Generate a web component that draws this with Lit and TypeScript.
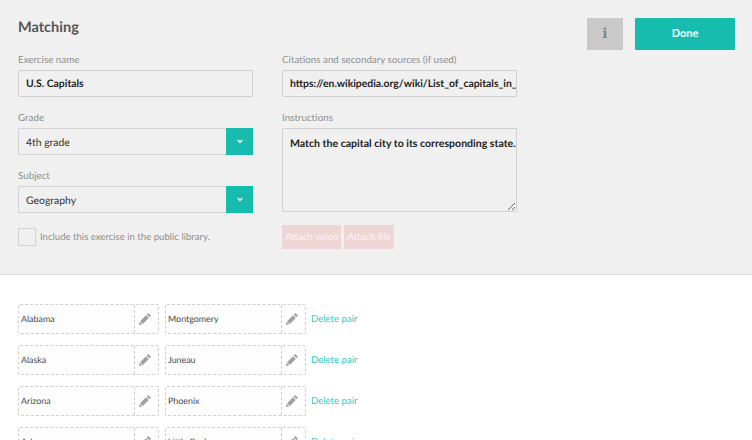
import { LitElement, html, css, svg } from "lit";
import { customElement } from "lit/decorators.js";

const pairs = [
  ["Alabama", "Montgomery"],
  ["Alaska", "Juneau"],
  ["Arizona", "Phoenix"],
  ["Arkansas", "Little Rock"],
];

const pencil = svg`<svg class="pencil" viewBox="0 0 14 14" width="12" height="12" aria-hidden="true">
  <path fill="currentColor" d="M10.2.6a.9.9 0 0 1 1.3 0l1.9 1.9a.9.9 0 0 1 0 1.3l-1.2 1.2-3.2-3.2zM8.2 2.6l3.2 3.2-6.9 6.9-3.2-3.2zM.8 10.2l3 3-3.5.7a.3.3 0 0 1-.3-.3z"/>
</svg>`;

const chevron = svg`<svg viewBox="0 0 8 6" width="6" height="5" aria-hidden="true">
  <path fill="none" stroke="#fff" stroke-width="2" d="M1 1l3 3 3-3"/>
</svg>`;

@customElement("app-root")
export class AppRoot extends LitElement {
  static styles = css`
    :host {
      display: block;
      width: 752px;
      height: 440px;
      overflow: hidden;
      background: #fff;
      font-family: "Lato", "Open Sans", sans-serif;
      color: #444;
      text-rendering: geometricPrecision;
    }
    * { box-sizing: border-box; }
    .panel {
      height: 275px;
      background: #f0f0f0;
      border-bottom: 1px solid #ddd;
      padding: 17px 17px 0 18px;
      display: flex;
      justify-content: space-between;
      align-items: flex-start;
    }
    h1 {
      margin: 0 0 16px;
      padding-top: 2px;
      font-size: 14.5px;
      line-height: 18px;
      font-weight: 700;
      color: #555;
    }
    .cols {
      display: grid;
      grid-template-columns: 235px 235px;
      column-gap: 29px;
    }
    .col { display: flex; flex-direction: column; }
    label, .label {
      display: block;
      font-size: 9.8px;
      line-height: 15px;
      color: #8f8f8f;
      margin-bottom: 2px;
      white-space: nowrap;
    }
    .field { margin-bottom: 14px; }
    .field.last { margin-bottom: 15px; }
    input, textarea {
      display: block;
      width: 235px;
      font: 700 10.4px/14px "Lato", sans-serif;
      text-rendering: geometricPrecision;
      color: #222;
      background: #f0f0f0;
      border: 1px solid #d0d0d0;
      border-radius: 1px;
      outline: none;
    }
    input { height: 27px; padding: 0 0 0 7px; }
    textarea {
      height: 84px;
      padding: 8px 0 8px 7px;
      font-size: 10.55px;
      resize: vertical;
      overflow: hidden;
      white-space: pre;
    }
    .select {
      height: 27px;
      display: flex;
      align-items: center;
      justify-content: space-between;
      border: 1px solid #d3d3d3;
      border-right: 0;
      border-radius: 2px;
      font-size: 10.4px;
      color: #333;
      padding-left: 7px;
    }
    .select-text { padding-top: 2px; }
    .arrow {
      width: 27px;
      height: 27px;
      margin-top: -1px;
      margin-bottom: -1px;
      background: #17bcae;
      display: flex;
      align-items: center;
      justify-content: center;
    }
    .check {
      display: flex;
      align-items: center;
      gap: 4px;
      font-size: 9.6px;
      color: #8f8f8f;
      white-space: nowrap;
    }
    .check-text { padding-top: 1px; }
    .box {
      width: 18px;
      height: 18px;
      flex: none;
      border: 1px solid #d3d3d3;
    }
    .attach { display: flex; gap: 3px; margin-top: -1px; }
    .attach span {
      height: 24px;
      line-height: 24px;
      padding: 0 3px;
      background: #eed5d6;
      color: #fbf4f4;
      font-size: 9.7px;
      white-space: nowrap;
      text-align: center;
    }
    .attach span:first-child { width: 59px; }
    .attach span:last-child { width: 50px; }
    .actions { display: flex; gap: 12px; margin-top: 1px; }
    .info {
      width: 36px;
      height: 32px;
      background: #c9c9c9;
      color: #858585;
      display: flex;
      align-items: center;
      justify-content: center;
      font: 700 14px "DejaVu Serif", serif;
    }
    .done {
      width: 100px;
      height: 32px;
      padding-bottom: 2px;
      border-radius: 1px;
      background: #17bcae;
      color: #fff;
      font-size: 11px;
      font-weight: 700;
      display: flex;
      align-items: center;
      justify-content: center;
    }
    .list {
      padding: 29px 18px 0;
      display: flex;
      flex-direction: column;
      gap: 11.5px;
    }
    .row { display: flex; align-items: center; }
    .cell {
      height: 29.5px;
      display: flex;
      flex: none;
      background: #fdfdfd;
      border: 1px dashed #cfcfcf;
      border-radius: 2px;
      font-size: 8.9px;
      color: #4a4a4a;
    }
    .cell.a { width: 141px; margin-right: 6px; }
    .cell.b { width: 141px; margin-right: 5px; }
    .name { flex: 1; padding-left: 2px; line-height: 28px; }
    .edit {
      width: 24px;
      padding-right: 3px;
      border-left: 1px dashed #cfcfcf;
      display: flex;
      align-items: center;
      justify-content: center;
      color: #a0a0a0;
    }
    .delete { font-size: 9.6px; color: #2ccbc0; padding-top: 1px; }
  `;

  render() {
    return html`
      <section class="panel">
        <div>
          <h1>Matching</h1>
          <div class="cols">
            <div class="col">
              <div class="field">
                <label for="name">Exercise name</label>
                <input id="name" .value=${"U.S. Capitals"} />
              </div>
              <div class="field">
                <div class="label">Grade</div>
                <div class="select"><span class="select-text">4th grade</span><span class="arrow">${chevron}</span></div>
              </div>
              <div class="field last">
                <div class="label">Subject</div>
                <div class="select"><span class="select-text">Geography</span><span class="arrow">${chevron}</span></div>
              </div>
              <div class="check"><span class="box"></span><span class="check-text">Include this exercise in the public library.</span></div>
            </div>
            <div class="col">
              <div class="field">
                <label for="cite">Citations and secondary sources (if used)</label>
                <input id="cite" .value=${"https://en.wikipedia.org/wiki/List_of_capitals_in_the_United_States"} />
              </div>
              <div class="field">
                <label for="ins">Instructions</label>
                <textarea id="ins" .value=${"Match the capital city to its corresponding state."}></textarea>
              </div>
              <div class="attach"><span>Attach video</span><span>Attach file</span></div>
            </div>
          </div>
        </div>
        <div class="actions">
          <div class="info">i</div>
          <div class="done">Done</div>
        </div>
      </section>
      <section class="list">
        ${pairs.map(
          ([a, b]) => html`
            <div class="row">
              <div class="cell a"><span class="name">${a}</span><span class="edit">${pencil}</span></div>
              <div class="cell b"><span class="name">${b}</span><span class="edit">${pencil}</span></div>
              <span class="delete">Delete pair</span>
            </div>
          `
        )}
      </section>
    `;
  }
}
